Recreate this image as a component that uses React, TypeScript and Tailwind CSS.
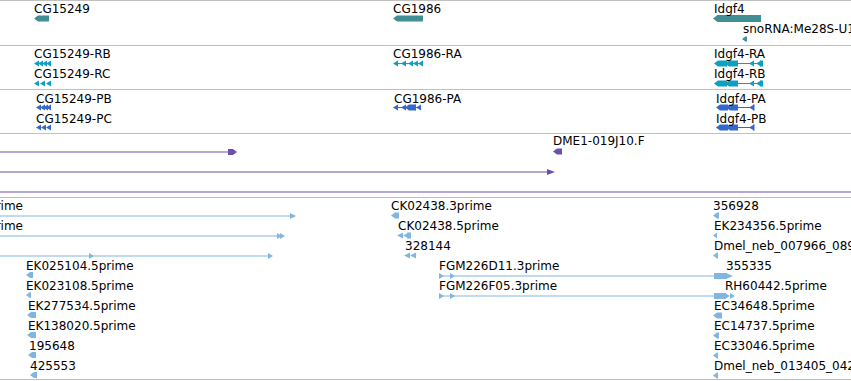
import type { ReactNode } from "react";

type Lbl = { t: string; x?: number; r?: number; y: number };

const TEAL = "#3f8f94";
const CYAN = "#0e9fc2";
const BLUE = "#3568cc";
const PURPLE = "#6d50ad";
const EST = "#80b6e0";

// left-pointing arrow block
function ArrowL({ x1, x2, y, h = 5, c }: { x1: number; x2: number; y: number; h?: number; c: string }) {
  const tip = Math.min(x1 + h / 2 + 1, x2);
  return <polygon points={`${x1},${y} ${tip},${y - h / 2} ${x2},${y - h / 2} ${x2},${y + h / 2} ${tip},${y + h / 2}`} fill={c} />;
}

function ArrowR({ x1, x2, y, h = 5, c }: { x1: number; x2: number; y: number; h?: number; c: string }) {
  const tip = Math.max(x2 - h / 2 - 1, x1);
  return <polygon points={`${x1},${y - h / 2} ${tip},${y - h / 2} ${x2},${y} ${tip},${y + h / 2} ${x1},${y + h / 2}`} fill={c} />;
}

function Line({ x1, x2, y, c }: { x1: number; x2: number; y: number; c: string }) {
  return <line x1={x1} x2={x2} y1={y} y2={y} stroke={c} strokeWidth={1} />;
}

function Chevrons({ xs, w, y, h = 5, c }: { xs: number[]; w: number; y: number; h?: number; c: string }) {
  return (
    <>
      {xs.map((x) => (
        <polygon key={x} points={`${x},${y} ${x + w},${y - h / 2} ${x + w},${y + h / 2}`} fill={c} />
      ))}
    </>
  );
}

// h = inner height; the bottom rule sits under it
function Track({ top, h, labels, children }: { top: number; h: number; labels: Lbl[]; children: ReactNode }) {
  return (
    <div className="relative w-full overflow-hidden border-b border-[#c0c0c0]" style={{ height: h + 1 }}>
      <svg className="absolute left-0 top-0" width={851} height={h} viewBox={`0 ${top} 851 ${h}`}>
        {children}
      </svg>
      {labels.map((l) => (
        <span
          key={l.t}
          className="absolute whitespace-nowrap text-[12px] leading-[14px] text-black"
          style={{ left: l.x, right: l.r, top: l.y - top }}
        >
          {l.t}
        </span>
      ))}
    </div>
  );
}

const genes: Lbl[] = [
  { t: "CG15249", x: 34, y: 2 },
  { t: "CG1986", x: 393, y: 2 },
  { t: "Idgf4", x: 714, y: 2 },
  { t: "snoRNA:Me28S-U1", x: 743, y: 22 },
];

const transcripts: Lbl[] = [
  { t: "CG15249-RB", x: 34, y: 47 },
  { t: "CG15249-RC", x: 34, y: 67 },
  { t: "CG1986-RA", x: 393, y: 47 },
  { t: "Idgf4-RA", x: 714, y: 47 },
  { t: "Idgf4-RB", x: 714, y: 67 },
];

const proteins: Lbl[] = [
  { t: "CG15249-PB", x: 36, y: 92 },
  { t: "CG15249-PC", x: 36, y: 112 },
  { t: "CG1986-PA", x: 394, y: 92 },
  { t: "Idgf4-PA", x: 716, y: 92 },
  { t: "Idgf4-PB", x: 716, y: 112 },
];

const clones: Lbl[] = [{ t: "DME1-019J10.F", x: 553, y: 134 }];

const ests: Lbl[] = [
  { t: "EK271430.5prime", r: 828, y: 199 },
  { t: "EK156829.5prime", r: 828, y: 219 },
  { t: "EK025104.5prime", x: 26, y: 259 },
  { t: "EK023108.5prime", x: 26, y: 279 },
  { t: "EK277534.5prime", x: 28, y: 299 },
  { t: "EK138020.5prime", x: 28, y: 319 },
  { t: "195648", x: 29, y: 339 },
  { t: "425553", x: 30, y: 359 },
  { t: "CK02438.3prime", x: 391, y: 199 },
  { t: "CK02438.5prime", x: 398, y: 219 },
  { t: "328144", x: 405, y: 239 },
  { t: "FGM226D11.3prime", x: 439, y: 259 },
  { t: "FGM226F05.3prime", x: 439, y: 279 },
  { t: "356928", x: 713, y: 199 },
  { t: "EK234356.5prime", x: 714, y: 219 },
  { t: "Dmel_neb_007966_0893", x: 714, y: 239 },
  { t: "355335", x: 726, y: 259 },
  { t: "RH60442.5prime", x: 725, y: 279 },
  { t: "EC34648.5prime", x: 714, y: 299 },
  { t: "EC14737.5prime", x: 714, y: 319 },
  { t: "EC33046.5prime", x: 714, y: 339 },
  { t: "Dmel_neb_013405_0421", x: 714, y: 359 },
];

function Idgf4Tx({ y, c }: { y: number; c: string }) {
  return (
    <>
      <Line x1={727} x2={762} y={y} c={c} />
      <ArrowL x1={714} x2={727} y={y} h={6} c={c} />
      <ArrowL x1={725} x2={738} y={y} h={6} c={c} />
      <Chevrons xs={[749]} w={5} y={y} h={6} c={c} />
      <Chevrons xs={[756]} w={5} y={y} h={6} c={c} />
      <rect x={760} y={y - 3} width={3} height={6} fill={c} />
    </>
  );
}

function Idgf4Pr({ y, c }: { y: number; c: string }) {
  return (
    <>
      <Line x1={727} x2={754} y={y} c={c} />
      <ArrowL x1={716} x2={728} y={y} h={6} c={c} />
      <ArrowL x1={726} x2={738} y={y} h={6} c={c} />
      <Chevrons xs={[749]} w={5} y={y} h={6} c={c} />
      <rect x={753} y={y - 3} width={1.5} height={6} fill={c} />
    </>
  );
}

export default function App() {
  return (
    <div className="w-[851px] h-[381px] overflow-hidden bg-white font-['DejaVu_Sans',sans-serif]">
      <div className="border-t border-[#c0c0c0]">
        <Track top={1} h={44} labels={genes}>
          <ArrowL x1={34} x2={49} y={18.5} h={6} c={TEAL} />
          <ArrowL x1={393} x2={423} y={18.5} h={6} c={TEAL} />
          <ArrowL x1={713} x2={761} y={18.5} h={7} c={TEAL} />
          <ArrowL x1={742} x2={747} y={39} h={5} c={TEAL} />
        </Track>

        <Track top={46} h={43} labels={transcripts}>
          <Chevrons xs={[34, 38, 42, 46]} w={5} y={63.5} h={6} c={CYAN} />
          <Chevrons xs={[34, 40, 46]} w={5} y={83.5} h={6} c={CYAN} />
          <Line x1={394} x2={423} y={63.5} c={CYAN} />
          <Chevrons xs={[393, 401, 408, 413, 418]} w={5} y={63.5} h={6} c={CYAN} />
          <Idgf4Tx y={63.5} c={CYAN} />
          <Idgf4Tx y={83.5} c={CYAN} />
        </Track>

        <Track top={90} h={43} labels={proteins}>
          <Chevrons xs={[36, 40, 43, 46]} w={5} y={107.5} h={6} c={BLUE} />
          <Chevrons xs={[36, 41, 46]} w={5} y={127.5} h={6} c={BLUE} />
          <Line x1={394} x2={421} y={107.5} c={BLUE} />
          <Chevrons xs={[393, 401]} w={5} y={107.5} h={6} c={BLUE} />
          <ArrowL x1={405} x2={416} y={107.5} h={6} c={BLUE} />
          <Chevrons xs={[411, 416]} w={5} y={107.5} h={6} c={BLUE} />
          <Idgf4Pr y={107.5} c={BLUE} />
          <Idgf4Pr y={127.5} c={BLUE} />
        </Track>

        <Track top={134} h={63} labels={clones}>
          <Line x1={0} x2={230} y={152} c={PURPLE} />
          <ArrowR x1={228} x2={237} y={152} h={6} c={PURPLE} />
          <ArrowL x1={553} x2={562} y={151.5} h={6} c={PURPLE} />
          <Line x1={0} x2={549} y={172} c={PURPLE} />
          <polygon points="547,169 555,172 547,175" fill={PURPLE} />
          <Line x1={0} x2={851} y={192} c={PURPLE} />
        </Track>

        <Track top={198} h={181} labels={ests}>
          <Line x1={0} x2={292} y={216} c={EST} />
          <polygon points="290,213 296,216 290,219" fill={EST} />
          <Line x1={0} x2={281} y={236} c={EST} />
          <polygon points="277,233 282,236 277,239" fill={EST} />
          <polygon points="280,233 285,236 280,239" fill={EST} />
          <Line x1={0} x2={270} y={256} c={EST} />
          <polygon points="89,253 94,256 89,259" fill={EST} />
          <polygon points="268,253 273,256 268,259" fill={EST} />

          <ArrowL x1={26} x2={33} y={275} h={6} c={EST} />
          <ArrowL x1={26} x2={31} y={295} h={6} c={EST} />
          <ArrowL x1={27} x2={36} y={315} h={6} c={EST} />
          <ArrowL x1={27} x2={36} y={335} h={6} c={EST} />
          <ArrowL x1={28} x2={36} y={355} h={6} c={EST} />
          <ArrowL x1={30} x2={37} y={375} h={6} c={EST} />

          <ArrowL x1={391} x2={399} y={215.5} h={6} c={EST} />
          <Chevrons xs={[397, 403]} w={6} y={235.5} h={6} c={EST} />
          <rect x={407} y={232.5} width={4} height={6} fill={EST} />
          <Chevrons xs={[404, 410]} w={6} y={255.5} h={6} c={EST} />

          <Line x1={439} x2={714} y={276} c={EST} />
          <polygon points="439,273 444,276 439,279" fill={EST} />
          <polygon points="450,273 455,276 450,279" fill={EST} />
          <rect x={714} y={273} width={13} height={6} fill={EST} />
          <polygon points="726,273 733,276 726,279" fill={EST} />
          <Line x1={439} x2={714} y={296} c={EST} />
          <polygon points="439,293 444,296 439,299" fill={EST} />
          <polygon points="450,293 455,296 450,299" fill={EST} />
          <rect x={714} y={293} width={12} height={6} fill={EST} />
          <polygon points="725,293 730,296 725,299" fill={EST} />
          <polygon points="730,293 735,296 730,299" fill={EST} />

          <ArrowL x1={713} x2={719} y={215.5} h={6} c={EST} />
          <ArrowL x1={713} x2={717} y={235.5} h={6} c={EST} />
          <ArrowL x1={713} x2={718} y={255.5} h={6} c={EST} />
          <ArrowL x1={713} x2={722} y={315.5} h={6} c={EST} />
          <ArrowL x1={713} x2={719} y={335.5} h={6} c={EST} />
          <ArrowL x1={713} x2={718} y={355.5} h={6} c={EST} />
          <ArrowL x1={713} x2={718} y={375.5} h={6} c={EST} />
        </Track>
      </div>
    </div>
  );
}
